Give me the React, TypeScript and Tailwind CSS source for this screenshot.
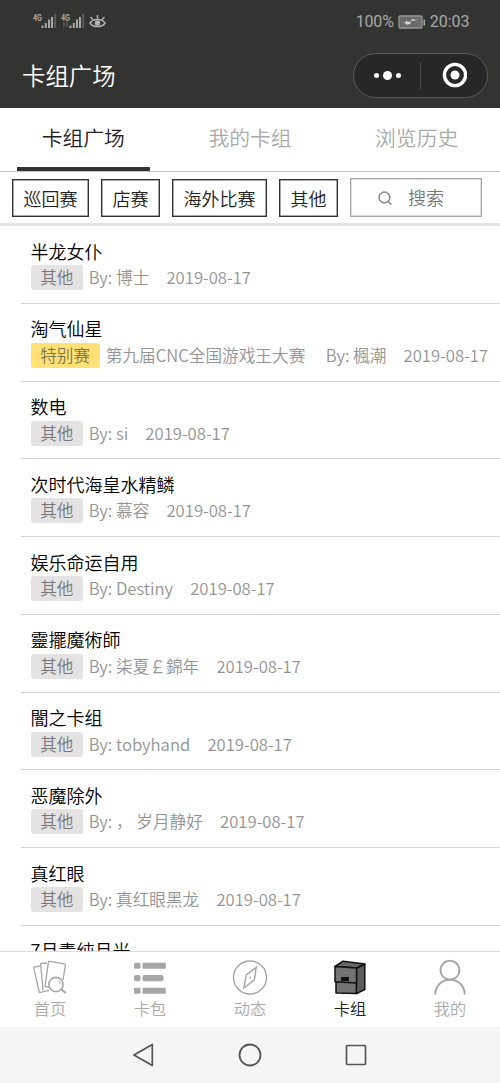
import clsx from "clsx";

interface Deck {
  title: string;
  tag: string;
  event?: string;
  author: string;
  date: string;
}

const decks: Deck[] = [
  { title: "半龙女仆", tag: "其他", author: "博士", date: "2019-08-17" },
  {
    title: "淘气仙星",
    tag: "特别赛",
    event: "第九届CNC全国游戏王大赛",
    author: "楓潮",
    date: "2019-08-17",
  },
  { title: "数电", tag: "其他", author: "si", date: "2019-08-17" },
  { title: "次时代海皇水精鳞", tag: "其他", author: "慕容", date: "2019-08-17" },
  { title: "娱乐命运自用", tag: "其他", author: "Destiny", date: "2019-08-17" },
  { title: "靈擺魔術師", tag: "其他", author: "柒夏￡錦年", date: "2019-08-17" },
  { title: "闇之卡组", tag: "其他", author: "tobyhand", date: "2019-08-17" },
  { title: "恶魔除外", tag: "其他", author: "， 岁月静好", date: "2019-08-17" },
  { title: "真红眼", tag: "其他", author: "真红眼黑龙", date: "2019-08-17" },
];

// only the top of this one shows above the menu
const nextTitle = "7月青纯月光";

const filters = ["巡回赛", "店赛", "海外比赛", "其他"];

const Signal = ({ data }: { data?: boolean }) => (
  <svg width="24" height="17" viewBox="0 0 24 17" fill="#a9a9a8">
    <text x="0" y="7.5" fontSize="8.5" fontWeight="700" fontFamily="Roboto, sans-serif" textLength="9" lengthAdjust="spacingAndGlyphs">
      4G
    </text>
    {data && <path d="M3 9v5M6 9v5" stroke="#666765" strokeWidth="1.2" />}
    <rect x="8.5" y="12.5" width="2" height="2.5" />
    <rect x="11.8" y="10" width="2" height="5" />
    <rect x="15" y="6.5" width="2" height="8.5" />
    <rect x="18" y="4" width="2" height="11" />
    <rect x="21.2" y="1" width="2" height="14" fill="#5b5c5a" />
  </svg>
);

const StatusBar = () => (
  <div className="flex h-[42px] items-center justify-between pt-px pl-[32.5px] pr-[30.5px] font-[Roboto,sans-serif] text-[16px] font-normal text-[#a9a9a8]">
    <div className="flex items-center">
      <Signal />
      <div className="ml-[4.5px]">
        <Signal data />
      </div>
      <svg className="ml-[4px]" width="17" height="16" viewBox="0 0 17 16" fill="none" stroke="#b3b3b2" strokeWidth="1.5">
        <path d="M1 9C4 4.3 13 4.3 16 9C13 13.8 4 13.8 1 9Z" />
        <circle cx="8.5" cy="9" r="2" fill="#b3b3b2" />
        <path d="M8.5 4.5V1M4 5.8L1.6 3M13 5.8L15.4 3" />
      </svg>
    </div>
    <div className="flex items-center">
      <span className="tracking-[-0.2px]">100%</span>
      <svg className="ml-[4px] mr-[4px]" width="28" height="14" viewBox="0 0 28 14">
        <rect x="1" y="1" width="23" height="12" rx="1" fill="#6b6c6a" stroke="#969695" strokeWidth="1.3" />
        <path d="M25.5 4.5h1.5v6h-1.5z" fill="#a9a9a8" />
        <path d="M5 7.2H8V5L9.5 7L13 6.6L12 9.2H9.5L9 10.5L8 8.4Z" fill="#dededd" />
        <path d="M12.5 5.5L14.5 3.5L15.5 4.5H19L16.5 6Z" fill="#c4c4c3" />
      </svg>
      <span>20:03</span>
    </div>
  </div>
);

const Header = () => (
  <header className="h-[108px] shrink-0 bg-[#333432]">
    <StatusBar />
    <div className="flex h-[66px] items-center justify-between pl-[22px] pr-[12px]">
      <h1 className="pt-[2px] text-[23.4px] leading-none text-white">卡组广场</h1>
      <div className="flex h-[45px] w-[135px] items-center rounded-full border border-[#5a5a59] bg-[#272727]">
        <div className="flex flex-1 items-center justify-center gap-[4px]">
          <span className="size-[5px] rounded-full bg-white" />
          <span className="size-[9px] rounded-full bg-white" />
          <span className="size-[5px] rounded-full bg-white" />
        </div>
        <div className="h-[27px] w-px bg-[#4c4c4b]" />
        <div className="flex flex-1 items-center justify-center">
          <svg width="26" height="26" viewBox="0 0 26 26">
            <circle cx="14" cy="13" r="10.6" fill="none" stroke="#fff" strokeWidth="3.4" />
            <circle cx="14" cy="13" r="4.5" fill="#fff" />
          </svg>
        </div>
      </div>
    </div>
  </header>
);

const Tabs = () => (
  <nav className="grid h-[64px] shrink-0 grid-cols-3 border-b border-[#c4c4c4] text-[20.8px] text-[#aaa]">
    <div className="mx-[17px] flex items-center justify-center border-b-4 border-[#333432] text-[#222]">
      <span className="whitespace-nowrap pt-px">卡组广场</span>
    </div>
    <div className="flex items-center justify-center pb-[3px]">我的卡组</div>
    <div className="flex items-center justify-center pb-[3px]">浏览历史</div>
  </nav>
);

const Filters = () => (
  <div className="flex h-[54px] shrink-0 items-start border-b-[3px] border-[#e3e3e3] pl-[12px] pt-[6px] text-[18px]">
    <div className="mt-px flex gap-[12px]">
      {filters.map((name) => (
        <div
          key={name}
          className="flex h-[38px] items-center border border-[#333] px-[10.5px] text-[#222] shadow-[inset_0_0_0_0.5px_#555]"
        >
          {name}
        </div>
      ))}
    </div>
    <div className="ml-[12px] flex h-[39px] w-[132px] items-center border border-[#aaa] pl-[27px] text-[#777] shadow-[inset_0_0_0_0.5px_#bbb]">
      <svg width="14" height="16" viewBox="0 0 14 16" fill="none" stroke="#888" strokeWidth="1.5">
        <circle cx="6.4" cy="7.5" r="5.4" />
        <path d="M10.2 11.5L13.3 14.8" />
      </svg>
      <span className="ml-[16px]">搜索</span>
    </div>
  </div>
);

const DeckRow = ({ deck }: { deck: Deck }) => (
  <li className="ml-[21px] h-[77.75px] border-b border-[#d3d3d3] pl-[9.5px] pt-[13.5px]">
    <h2 className="h-[25.5px] text-[18px] leading-[22px] text-black">{deck.title}</h2>
    <div className="flex h-[25px] items-center whitespace-nowrap text-[16.65px] leading-[25px] text-[#949494]">
      <span
        className={clsx(
          "h-[25px] rounded-[3px] px-[9.7px]",
          deck.event ? "bg-[#ffe176] text-[#7d734e]" : "bg-[#e5e2e4] text-[#777]"
        )}
      >
        {deck.tag}
      </span>
      {deck.event && <span className="ml-[6px] mr-[15px]">{deck.event}</span>}
      <span className="ml-[5.5px]">By: {deck.author}</span>
      <span className="ml-[17.2px]">{deck.date}</span>
    </div>
  </li>
);

const HomeIcon = () => (
  <svg width="36" height="36" viewBox="0 0 36 36" fill="none" stroke="#a6a6a6" strokeWidth="1.3" strokeLinejoin="round">
    <path d="M8.3 6.8L1.7 8.4L7.3 33.6L17 31.4" />
    <path d="M15 4L8.6 4.7L11 31.5M16.4 3.2Q16.6 2.2 17.7 2.4L32.4 4.8Q33.6 5 33.4 6.2L31 21M16.4 3.2L13 27.5L17 28.2" />
    <circle cx="24" cy="25.5" r="7.1" strokeWidth="1.6" />
    <path d="M26 21.5Q28.5 23 28.6 25.5" strokeWidth="1" />
    <path d="M28.8 30L33.8 34" strokeWidth="2" />
  </svg>
);

const PackIcon = () => (
  <svg width="36" height="36" viewBox="0 0 36 36" fill="#a6a6a6">
    <rect x="2" y="3.7" width="6.5" height="6" rx="1.5" />
    <rect x="10.5" y="3.7" width="23.3" height="6" rx="1.2" />
    <rect x="2" y="16" width="6.5" height="6.3" rx="2" />
    <rect x="10.5" y="16" width="21" height="6.3" rx="2" />
    <rect x="2" y="28.7" width="6.5" height="6" rx="1.2" />
    <rect x="10.5" y="28.7" width="23.3" height="6" rx="1.2" />
  </svg>
);

const CompassIcon = () => (
  <svg width="36" height="36" viewBox="0 0 36 36" fill="none" stroke="#a6a6a6" strokeWidth="1.4">
    <circle cx="18" cy="18.5" r="16.5" />
    <path d="M24.3 8.3L14.3 16L12 28.7L22.3 21Z" />
    <circle cx="18.2" cy="18.5" r="1" fill="#a6a6a6" stroke="none" />
  </svg>
);

const DeckBoxIcon = () => (
  <svg width="36" height="36" viewBox="0 0 36 36" stroke="#111" strokeWidth="1.5" strokeLinejoin="round">
    <path d="M4 22.5V34L24.5 34.6V23Z" fill="#737373" />
    <path d="M24.5 9L32.8 5V30.5L24.5 34.6Z" fill="#5c5c5c" />
    <path d="M3 7.5L11 2.2L32.8 5L24.5 9Z" fill="#686868" />
    <path d="M3 7.5L24.5 9V24L3 22.7Z" fill="#737373" />
    <path d="M9 18h8v4H9z" fill="#111" stroke="none" />
  </svg>
);

const UserIcon = () => (
  <svg width="36" height="36" viewBox="0 0 36 36" fill="none" stroke="#a6a6a6" strokeWidth="2">
    <circle cx="18" cy="11.2" r="9.5" />
    <path d="M3.3 35.5C3.3 26.5 9.8 20.7 18 20.7S32.7 26.5 32.7 35.5" />
  </svg>
);

const menu = [
  { label: "首页", Icon: HomeIcon },
  { label: "卡包", Icon: PackIcon },
  { label: "动态", Icon: CompassIcon },
  { label: "卡组", Icon: DeckBoxIcon, active: true },
  { label: "我的", Icon: UserIcon },
];

const BottomMenu = () => (
  <nav className="grid h-[76px] shrink-0 grid-cols-5 border-t border-[#dcdcdc] bg-white">
    {menu.map(({ label, Icon, active }) => (
      <div key={label} className="flex flex-col items-center pt-[7px]">
        <Icon />
        <span
          className={clsx(
            "mt-[3px] text-[16.2px] leading-[20px]",
            active ? "text-[#222]" : "text-[#aaa]"
          )}
        >
          {label}
        </span>
      </div>
    ))}
  </nav>
);

const SystemNav = () => (
  <div className="flex h-[56px] shrink-0 items-center justify-center gap-[82px] bg-[#f5f5f5]">
    <svg width="24" height="24" viewBox="0 0 24 24" fill="none" stroke="#555" strokeWidth="1.7" strokeLinejoin="round">
      <path d="M2 12L20.3 1.5V22.5Z" />
    </svg>
    <svg width="24" height="24" viewBox="0 0 24 24" fill="none" stroke="#555" strokeWidth="1.8">
      <circle cx="12" cy="12" r="10.5" />
    </svg>
    <svg width="24" height="24" viewBox="0 0 24 24" fill="none" stroke="#555" strokeWidth="1.7">
      <rect x="2.5" y="2.5" width="19" height="19" rx="1" />
    </svg>
  </div>
);

const App: React.FC = () => {
  return (
    <div className="flex h-[1083px] w-[500px] flex-col overflow-hidden bg-white font-['Noto_Sans_CJK_SC',sans-serif] font-[350]">
      <Header />
      <Tabs />
      <Filters />
      <ul className="min-h-0 flex-1 overflow-hidden">
        {decks.map((deck) => (
          <DeckRow key={deck.title} deck={deck} />
        ))}
        <li className="ml-[21px] pl-[9.5px] pt-[13.5px] text-[18px] leading-[22px] text-black">
          {nextTitle}
        </li>
      </ul>
      <BottomMenu />
      <SystemNav />
    </div>
  );
};

export default App;
